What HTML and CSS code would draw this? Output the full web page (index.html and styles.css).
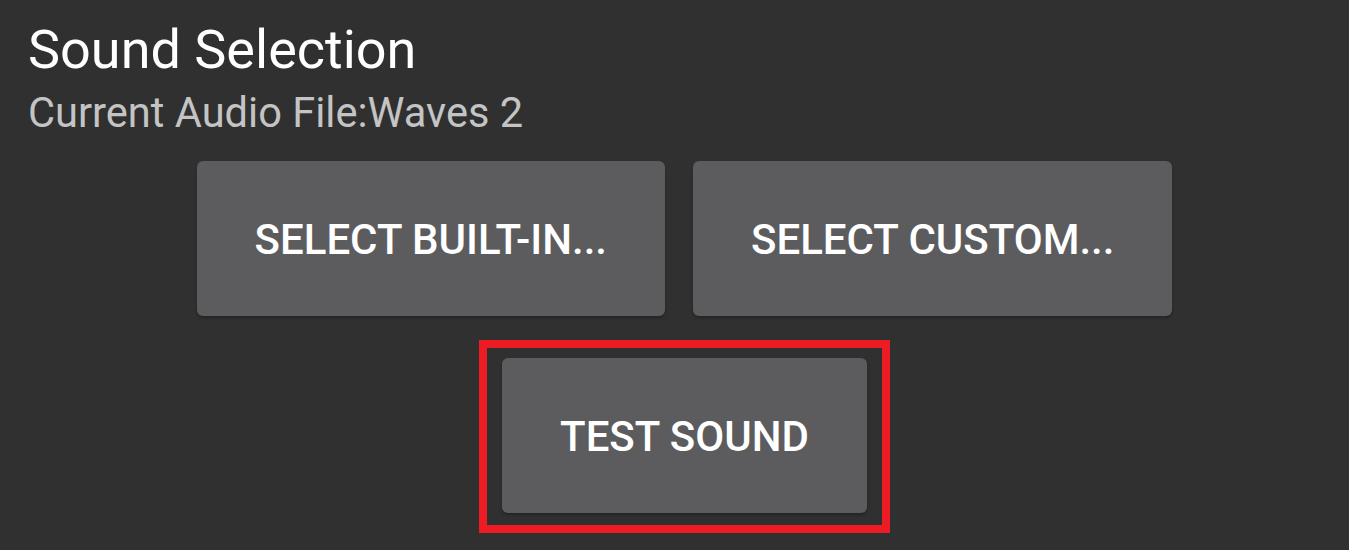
FILE: index.html
```html
<!DOCTYPE html>
<html>
<head>
<meta charset="utf-8">
<link rel="stylesheet" href="styles.css">
</head>
<body>
<div class="screen">
  <h1 class="title">Sound Selection</h1>
  <p class="subtitle">Current Audio File:Waves 2</p>
  <div class="actions">
    <div class="row">
      <button class="btn">SELECT BUILT-IN...</button>
      <button class="btn">SELECT CUSTOM...</button>
    </div>
    <div class="highlight">
      <button class="btn">TEST SOUND</button>
    </div>
  </div>
</div>
</body>
</html>
```
FILE: styles.css
```css
html, body {
  margin: 0;
  padding: 0;
  background: #303030;
  height: 100%;
}
.screen {
  padding: 18px 8px 0 28px;
  font-family: Roboto, "Noto Sans", sans-serif;
}
.title {
  margin: 0;
  font-size: 54px;
  line-height: 64px;
  font-weight: 400;
  color: #ffffff;
}
.subtitle {
  margin: 7px 0 0 0;
  font-size: 41.6px;
  line-height: 48px;
  color: #c4c4c4;
}
.actions {
  margin-top: 24px;
  display: flex;
  flex-direction: column;
  align-items: center;
  gap: 24px;
}
.row {
  display: flex;
  gap: 28px;
}
.btn {
  height: 155px;
  padding: 2px 58px 0 58px;
  border: none;
  border-radius: 6px;
  background: #5c5c5e;
  color: #ffffff;
  font-family: Roboto, "Noto Sans", sans-serif;
  font-weight: 500;
  font-size: 42px;
  letter-spacing: 0;
  box-shadow: 0 2px 3px rgba(0, 0, 0, 0.25);
  white-space: nowrap;
}
.highlight {
  border: 8px solid #ed1c24;
  padding: 10px 15px 12px 15px;
}
```
